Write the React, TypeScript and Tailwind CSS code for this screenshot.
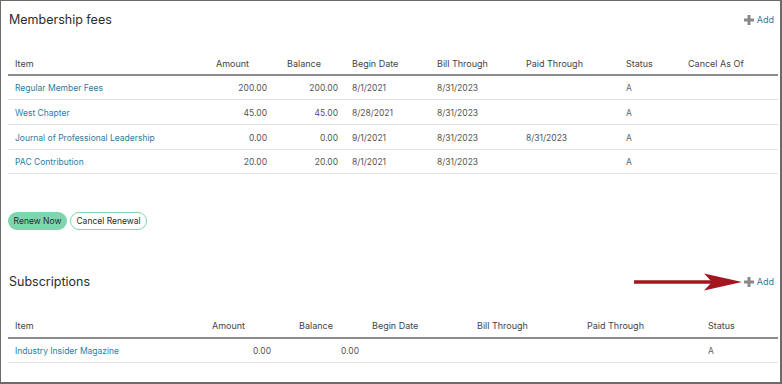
import React from "react";

const font = { fontFamily: "Inter, 'Open Sans', Arial, sans-serif" };

function PlusAdd() {
  return (
    <div className="flex items-center gap-[3px]">
      <svg width="10" height="10" viewBox="0 0 10 10">
        <rect x="3.5" y="0" width="3" height="10" fill="#8a8a8a" />
        <rect x="0" y="3.5" width="10" height="3" fill="#8a8a8a" />
      </svg>
      <span className="text-[9px] text-[#2b7ea1]">Add</span>
    </div>
  );
}

const mCols = "grid-cols-[202px_64px_71px_85px_89px_100px_62px_97px]";
const sCols = "grid-cols-[192px_78px_87px_105px_110px_121px_77px]";

const mRows = [
  ["Regular Member Fees", "200.00", "200.00", "8/1/2021", "8/31/2023", "", "A", ""],
  ["West Chapter", "45.00", "45.00", "8/28/2021", "8/31/2023", "", "A", ""],
  ["Journal of Professional Leadership", "0.00", "0.00", "9/1/2021", "8/31/2023", "8/31/2023", "A", ""],
  ["PAC Contribution", "20.00", "20.00", "8/1/2021", "8/31/2023", "", "A", ""],
];
const rowH = ["h-[24px]", "h-[25px]", "h-[25px]", "h-[24px]"];

export default function App() {
  return (
    <div style={font} className="w-[782px] h-[384px] bg-white border-t border-l border-r-2 border-b-2 border-[#6b6b6b] overflow-hidden">
      <div className="pl-[7px] pr-[2px]">
        {/* Membership title */}
        <div className="flex items-center justify-between h-[20px] mt-[9px] pr-[4px]">
          <span className="text-[12.5px] text-[#2d2d2d] pl-[1px]">Membership fees</span>
          <PlusAdd />
        </div>
        {/* Membership table */}
        <div className="mt-[22px]">
          <div className={`grid ${mCols} h-[24px] pt-[1px] items-center border-b-2 border-[#8c8c8c] text-[#444] text-[9px]`}>
            <div className="pl-[7px]">Item</div>
            <div className="text-right pr-[25px]">Amount</div>
            <div className="text-right pr-[24px]">Balance</div>
            <div className="pl-[7px]">Begin Date</div>
            <div className="pl-[7px]">Bill Through</div>
            <div className="pl-[7px]">Paid Through</div>
            <div className="pl-[7px]">Status</div>
            <div className="pl-[7px]">Cancel As Of</div>
          </div>
          {mRows.map((r, i) => (
            <div key={i} className={`grid ${mCols} ${rowH[i]} pt-[2px] items-center border-b border-[#e2e2e2] text-[#555] text-[8.5px]`}>
              <div className="pl-[7px] text-[#2b7ea1]">{r[0]}</div>
              <div className="text-right pr-[7px]">{r[1]}</div>
              <div className="text-right pr-[7px]">{r[2]}</div>
              <div className="pl-[7px]">{r[3]}</div>
              <div className="pl-[7px]">{r[4]}</div>
              <div className="pl-[7px]">{r[5]}</div>
              <div className="pl-[7px] text-[#666]">{r[6]}</div>
              <div className="pl-[7px]">{r[7]}</div>
            </div>
          ))}
        </div>
        {/* Buttons */}
        <div className="flex gap-[3px] mt-[38px] text-[8.5px]">
          <button className="h-[18px] w-[59px] rounded-full bg-[#7fd6ad] text-[#2a2a2a]">Renew Now</button>
          <button className="h-[18px] w-[77px] rounded-full border border-[#7fd6ad] bg-white text-[#2a2a2a]">Cancel Renewal</button>
        </div>
        {/* Subscriptions title */}
        <div className="flex items-center justify-between h-[20px] mt-[42px] pr-[4px]">
          <span className="text-[12.5px] text-[#2d2d2d] pl-[1px]">Subscriptions</span>
          <div className="flex items-center gap-[2px]">
            <svg width="108" height="20" viewBox="0 0 108 20">
              <line x1="0" y1="10" x2="84" y2="10" stroke="#a3151f" strokeWidth="3.5" />
              <path d="M70 1.5 L108 10 L70 18.5 L78 10 Z" fill="#a3151f" />
            </svg>
            <PlusAdd />
          </div>
        </div>
        {/* Subscriptions table */}
        <div className="mt-[22px]">
          <div className={`grid ${sCols} h-[25px] pt-[1px] items-center border-b-2 border-[#8c8c8c] text-[#444] text-[9px]`}>
            <div className="pl-[7px]">Item</div>
            <div className="text-right pr-[33px]">Amount</div>
            <div className="text-right pr-[32px]">Balance</div>
            <div className="pl-[7px]">Begin Date</div>
            <div className="pl-[7px]">Bill Through</div>
            <div className="pl-[7px]">Paid Through</div>
            <div className="pl-[7px]">Status</div>
          </div>
          <div className={`grid ${sCols} h-[24px] pt-[2px] items-center border-b border-[#e2e2e2] text-[#555] text-[8.5px]`}>
            <div className="pl-[7px] text-[#2b7ea1]">Industry Insider Magazine</div>
            <div className="text-right pr-[7px]">0.00</div>
            <div className="text-right pr-[6px]">0.00</div>
            <div className="pl-[7px]"></div>
            <div className="pl-[7px]"></div>
            <div className="pl-[7px]"></div>
            <div className="pl-[7px] text-[#666]">A</div>
          </div>
        </div>
      </div>
    </div>
  );
}
